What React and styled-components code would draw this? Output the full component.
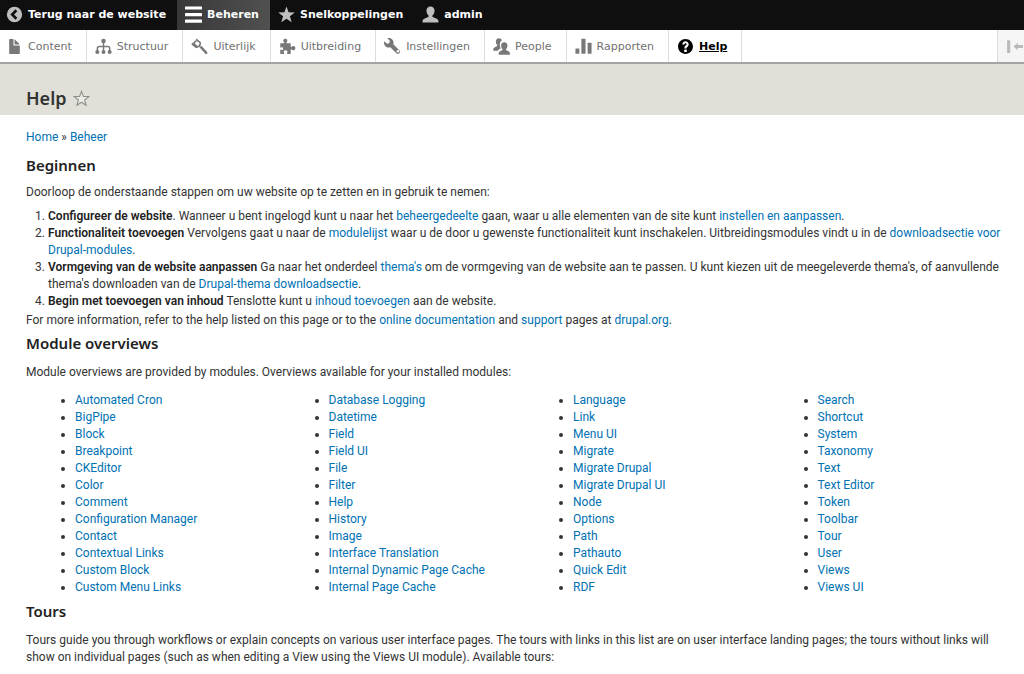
import React from 'react'
import styled, { createGlobalStyle } from 'styled-components'

const GlobalStyle = createGlobalStyle`
    * {
        box-sizing: border-box;
    }

    body {
        margin: 0;
        background: #ffffff;
        color: #333333;
        font-family: Roboto, 'Noto Sans', sans-serif;
        font-size: 12px;
        line-height: 17px;
    }
`

const StyledBar = styled.nav`
    display: flex;
    height: 30px;
    background: #0f0f0f;
    font-family: 'DejaVu Sans', Verdana, sans-serif;
    font-size: 11px;
`

const StyledTab = styled.a`
    display: flex;
    align-items: center;
    gap: 5px;
    padding: 0 11px 2px 8px;
    background: ${({ $active }) =>
        $active ? 'linear-gradient(90deg, #383838, #505050)' : 'transparent'};
    color: #ffffff;
    font-weight: bold;
    text-decoration: none;
    white-space: nowrap;

    &:first-child {
        padding-left: 6px;
    }

    svg {
        color: ${({ $active }) => ($active ? '#ffffff' : '#bebebe')};
    }
`

const StyledTray = styled.nav`
    display: flex;
    justify-content: space-between;
    height: 34px;
    border-bottom: 2px solid #a4a4a2;
    background: #ffffff;
    font-family: 'DejaVu Sans', Verdana, sans-serif;
    font-size: 11px;
`

const StyledMenu = styled.div`
    display: flex;
`

const StyledMenuLink = styled.a`
    display: flex;
    align-items: center;
    gap: 5px;
    padding: 0 14px 0 8px;
    border-right: 1px solid #dddddd;
    color: ${({ $active }) => ($active ? '#000000' : '#707070')};
    font-weight: ${({ $active }) => ($active ? 'bold' : 'normal')};
    text-decoration: none;
    white-space: nowrap;

    &:first-child {
        padding-left: 6px;
    }

    span {
        text-decoration: ${({ $active }) => ($active ? 'underline' : 'none')};
    }

    svg {
        color: ${({ $active }) => ($active ? '#000000' : '#787878')};
    }
`

const StyledToggle = styled.button`
    display: flex;
    align-items: center;
    width: 27px;
    padding: 0 0 0 8px;
    overflow: hidden;
    border: 0;
    border-left: 1px solid #dddddd;
    background: #f5f5f5;
    color: #bababa;
`

const StyledIcon = styled.svg`
    flex: none;
    width: 17px;
    height: 17px;
    fill: currentColor;
`

const StyledHeader = styled.header`
    display: flex;
    align-items: center;
    gap: 6px;
    padding: 22px 26px 4px;
    background: #e0e0d8;
`

const StyledTitle = styled.h1`
    margin: 0;
    font-family: 'Noto Sans', sans-serif;
    font-size: 18px;
    font-weight: 600;
    line-height: 25px;
`

const StyledStar = styled.button`
    display: flex;
    padding: 0;
    border: 0;
    background: none;
    color: #8c8c88;
`

const StyledMain = styled.main`
    padding: 14px 20px 8px 26px;
`

const StyledLink = styled.a`
    color: #0071b3;
    text-decoration: none;
`

const StyledHeading = styled.h2`
    margin: 0;
    color: #222222;
    font-family: 'Noto Sans', sans-serif;
    font-size: 15px;
    font-weight: 600;
    line-height: 20px;
`

const StyledIntro = styled.section`
    padding: 9px 0 4px;

    p {
        margin: 9px 0 7px;
    }

    ol {
        margin: 0 0 2px;
        padding-left: 22px;
    }

    p:last-child {
        margin: 0;
    }
`

const StyledStrong = styled.strong`
    color: #222222;
    font-weight: 600;
`

const StyledSection = styled.section`
    p {
        margin: 11px 0;
    }
`

const StyledColumns = styled.div`
    display: grid;
    grid-template-columns: repeat(4, 1fr);
    padding-bottom: 5px;
`

const StyledList = styled.ul`
    margin: 0;
    padding-left: 58px;

    &:first-child {
        padding-left: 49px;
    }
`

const icons = {
    back: (
        <>
            <circle cx="8" cy="8" r="7.2" />
            <path
                d="M9.8 4L5.8 8l4 4"
                fill="none"
                stroke="#0f0f0f"
                strokeWidth="2.4"
            />
        </>
    ),
    menu: (
        <>
            <rect x="0" y="0.4" width="16" height="3" rx="0.5" />
            <rect x="0" y="6.6" width="16" height="3" rx="0.5" />
            <rect x="0" y="12.8" width="16" height="3" rx="0.5" />
        </>
    ),
    star: (
        <path d="M8 .4l2 5.4 5.8.2-4.6 3.6 1.7 5.8L8 12.1l-4.9 3.3 1.7-5.8L.2 6 6 5.8z" />
    ),
    person: (
        <path d="M8 .4c-2.3 0-3.8 1.6-3.8 3.9 0 1.9.7 3.7 1.9 4.7.3.4.2 1.1-.3 1.4-1.3.8-5.3 1.6-5.3 3.9v1.3h15v-1.3c0-2.3-4-3.1-5.3-3.900-.5-.3-.6-1-.3-1.400 1.200-1 1.900-2.800 1.900-4.700C11.800 2 10.300.4 8 .4z" />
    ),
    file: (
        <>
            <path d="M12.5 7h-5c-.276 0-.5-.225-.5-.5v-5c0-.275-.225-.5-.5-.5h-3c-.275 0-.5.225-.5.5v13c0 .275.225.5.5.5h9c.275 0 .5-.225.5-.5v-7c0-.275-.225-.5-.5-.5z" />
            <path d="M8.5 6h4c.275 0 .34-.159.146-.354L8.354 1.354C8.159 1.159 8 1.225 8 1.5v4c0 .275.225.5.5.5z" />
        </>
    ),
    structure: (
        <>
            <circle cx="8" cy="2.8" r="2.1" />
            <path
                d="M8 4v9M2.2 13V9.7q0-1.7 1.7-1.7h8.2q1.7 0 1.7 1.7V13"
                fill="none"
                stroke="currentColor"
                strokeWidth="1.4"
            />
            <circle cx="2.2" cy="13.2" r="1.9" />
            <circle cx="8" cy="13.2" r="1.9" />
            <circle cx="13.8" cy="13.2" r="1.9" />
        </>
    ),
    brush: (
        <>
            <path
                fillRule="evenodd"
                d="M5.200.5L9.600 4.300 8.800 8.200 4.800 9.700.3 6.200 1.400 4.300 2.200 4.600 3 2.900 4.200 2.600zM5.400 2.800L3.500 5.200 6.600 7.800 8.200 5z"
            />
            <path d="M8.100 8.900l1.700-1.600 5.400 5.800q.7 1-.1 1.700-.9.700-1.800-.2z" />
        </>
    ),
    puzzle: (
        <path d="M1.200 5h3.200c.5 0 .6-.5.300-.9C3.300 2.700 4.200.8 5.900.8s2.700 1.900 1.300 3.300c-.4.400-.2.900.3.900H11v2.900c0 .6.500.8.9.400 1.400-1.500 3.500-.5 3.500 1.300s-2.100 2.800-3.500 1.300c-.4-.4-.9-.2-.9.400V15H8c-.5 0-.7-.5-.4-.9.900-1.300.1-2.500-1.400-2.500s-2.300 1.200-1.400 2.500c.3.400.1.900-.4.900H1.200v-3.700c0-.5.400-.6.8-.3 1.100.8 1.900.1 1.900-1S3.100 8.200 2 9c-.4.3-.8.100-.8-.4z" />
    ),
    wrench: (
        <path d="M14.416 11.586L8.75 5.921c.15-.449.252-.921.252-1.421C9.002 2.015 6.986 0 4.5 0c-.505 0-.981.102-1.434.255l2.431 2.431-.588 2.196-2.196.588L.268 3.025C.106 3.489 0 3.981 0 4.5 0 6.986 2.014 9 4.5 9c.5 0 .972-.102 1.421-.251l5.667 5.665c.781.781 2.047.781 2.828 0s.781-2.047 0-2.828zM13 13.75c-.69 0-1.25-.56-1.25-1.25s.56-1.25 1.25-1.25 1.25.56 1.25 1.25-.56 1.25-1.25 1.25z" />
    ),
    people: (
        <>
            <path d="M5.6.3C3.7.3 2.7 1.6 2.7 3.3c0 1.3.4 2.5 1.2 3.3.3.4.1.9-.4 1.2C2.4 8.4.2 9 .2 10.9v1h4.400c.6-1 1.600-1.600 2.700-2C6.400 8.200 6 5.600 6.900 3.800c.3-.6.800-1.100 1.400-1.400C8 1.100 7.100.3 5.600.3z" />
            <path
                d="M10.600 3.900c-1.900 0-3 1.300-3 3.100 0 1.300.5 2.600 1.300 3.400.3.400.1.900-.3 1.200-1.100.6-3.300 1.100-3.300 3v1.100h10.600v-1.100c0-1.900-2.200-2.400-3.300-3-.4-.3-.6-.8-.3-1.200.8-.8 1.300-2.100 1.300-3.400 0-1.800-1.100-3.100-3-3.100z"
                stroke="#ffffff"
                strokeWidth="0.8"
                paintOrder="stroke"
            />
        </>
    ),
    chart: (
        <>
            <rect x="0.4" y="9.8" width="3.7" height="5" rx="0.5" />
            <rect x="6" y="0.8" width="3.9" height="14" rx="0.5" />
            <rect x="11.9" y="4.4" width="3.7" height="10.4" rx="0.5" />
        </>
    ),
    help: (
        <path d="M8.002 1c-3.868 0-7.002 3.134-7.002 7s3.134 7 7.002 7c3.865 0 7-3.134 7-7s-3.135-7-7-7zm3 5c0 .551-.16 1.085-.477 1.586l-.158.22c-.07.093-.189.241-.361.393-.168.148-.35.299-.545.447l-.203.189-.141.129-.096.17-.021.235v.63h-2.001v-.704c.026-.396.078-.73.204-.999.125-.269.271-.498.439-.688l.225-.21-.01-.015.176-.14.137-.128c.186-.139.357-.277.516-.417l.148-.18c.098-.152.168-.323.168-.518 0-.552-.447-1-1-1s-1.002.448-1.002 1h-2c0-1.657 1.343-3 3.002-3 1.656 0 3 1.343 3 3zm-1.75 6.619c0 .344-.281.625-.625.625h-1.25c-.345 0-.626-.281-.626-.625v-1.238c0-.344.281-.625.626-.625h1.25c.344 0 .625.281.625.625v1.238z" />
    ),
    collapse: (
        <>
            <rect x="1" y="2" width="3" height="12" rx="0.5" />
            <path d="M7 8l4-3.5v2.2h5v2.6h-5v2.2z" />
        </>
    ),
    starOutline: (
        <path
            d="M8 1.3l1.8 4.7 5.1.2-4 3.2 1.4 4.9L8 11.5l-4.3 2.8 1.4-4.9-4-3.2 5.1-.2z"
            fill="#ecece6"
            stroke="currentColor"
        />
    ),
}

function Icon({ name }) {
    return (
        <StyledIcon viewBox="0 0 16 16" aria-hidden="true">
            {icons[name]}
        </StyledIcon>
    )
}

const tabs = [
    { icon: 'back', label: 'Terug naar de website' },
    { icon: 'menu', label: 'Beheren', active: true },
    { icon: 'star', label: 'Snelkoppelingen' },
    { icon: 'person', label: 'admin' },
]

const menu = [
    { icon: 'file', label: 'Content' },
    { icon: 'structure', label: 'Structuur' },
    { icon: 'brush', label: 'Uiterlijk' },
    { icon: 'puzzle', label: 'Uitbreiding' },
    { icon: 'wrench', label: 'Instellingen' },
    { icon: 'people', label: 'People' },
    { icon: 'chart', label: 'Rapporten' },
    { icon: 'help', label: 'Help', active: true },
]

const modules = [
    [
        'Automated Cron',
        'BigPipe',
        'Block',
        'Breakpoint',
        'CKEditor',
        'Color',
        'Comment',
        'Configuration Manager',
        'Contact',
        'Contextual Links',
        'Custom Block',
        'Custom Menu Links',
    ],
    [
        'Database Logging',
        'Datetime',
        'Field',
        'Field UI',
        'File',
        'Filter',
        'Help',
        'History',
        'Image',
        'Interface Translation',
        'Internal Dynamic Page Cache',
        'Internal Page Cache',
    ],
    [
        'Language',
        'Link',
        'Menu UI',
        'Migrate',
        'Migrate Drupal',
        'Migrate Drupal UI',
        'Node',
        'Options',
        'Path',
        'Pathauto',
        'Quick Edit',
        'RDF',
    ],
    [
        'Search',
        'Shortcut',
        'System',
        'Taxonomy',
        'Text',
        'Text Editor',
        'Token',
        'Toolbar',
        'Tour',
        'User',
        'Views',
        'Views UI',
    ],
]

export default function App() {
    return (
        <>
            <GlobalStyle />
            <StyledBar>
                {tabs.map(({ icon, label, active }) => (
                    <StyledTab key={label} href="#" $active={active}>
                        <Icon name={icon} />
                        {label}
                    </StyledTab>
                ))}
            </StyledBar>
            <StyledTray>
                <StyledMenu>
                    {menu.map(({ icon, label, active }) => (
                        <StyledMenuLink key={label} href="#" $active={active}>
                            <Icon name={icon} />
                            <span>{label}</span>
                        </StyledMenuLink>
                    ))}
                </StyledMenu>
                <StyledToggle type="button" aria-label="Verticaal">
                    <Icon name="collapse" />
                </StyledToggle>
            </StyledTray>
            <StyledHeader>
                <StyledTitle>Help</StyledTitle>
                <StyledStar type="button" aria-label="Snelkoppeling">
                    <Icon name="starOutline" />
                </StyledStar>
            </StyledHeader>
            <StyledMain>
                <nav>
                    <StyledLink href="#">Home</StyledLink> »{' '}
                    <StyledLink href="#">Beheer</StyledLink>
                </nav>
                <StyledIntro>
                    <StyledHeading>Beginnen</StyledHeading>
                    <p>
                        Doorloop de onderstaande stappen om uw website op te
                        zetten en in gebruik te nemen:
                    </p>
                    <ol>
                        <li>
                            <StyledStrong>Configureer de website</StyledStrong>.
                            Wanneer u bent ingelogd kunt u naar het{' '}
                            <StyledLink href="#">beheergedeelte</StyledLink>{' '}
                            gaan, waar u alle elementen van de site kunt{' '}
                            <StyledLink href="#">
                                instellen en aanpassen
                            </StyledLink>
                            .
                        </li>
                        <li>
                            <StyledStrong>
                                Functionaliteit toevoegen
                            </StyledStrong>{' '}
                            Vervolgens gaat u naar de{' '}
                            <StyledLink href="#">modulelijst</StyledLink> waar u
                            de door u gewenste functionaliteit kunt inschakelen.
                            Uitbreidingsmodules vindt u in de{' '}
                            <StyledLink href="#">
                                downloadsectie voor Drupal-modules
                            </StyledLink>
                            .
                        </li>
                        <li>
                            <StyledStrong>
                                Vormgeving van de website aanpassen
                            </StyledStrong>{' '}
                            Ga naar het onderdeel{' '}
                            <StyledLink href="#">thema's</StyledLink> om de
                            vormgeving van de website aan te passen. U kunt
                            kiezen uit de meegeleverde thema's, of aanvullende
                            thema's downloaden van de{' '}
                            <StyledLink href="#">
                                Drupal-thema downloadsectie
                            </StyledLink>
                            .
                        </li>
                        <li>
                            <StyledStrong>
                                Begin met toevoegen van inhoud
                            </StyledStrong>{' '}
                            Tenslotte kunt u{' '}
                            <StyledLink href="#">inhoud toevoegen</StyledLink>{' '}
                            aan de website.
                        </li>
                    </ol>
                    <p>
                        For more information, refer to the help listed on this
                        page or to the{' '}
                        <StyledLink href="#">online documentation</StyledLink>{' '}
                        and <StyledLink href="#">support</StyledLink> pages at{' '}
                        <StyledLink href="#">drupal.org</StyledLink>.
                    </p>
                </StyledIntro>
                <StyledSection>
                    <StyledHeading>Module overviews</StyledHeading>
                    <p>
                        Module overviews are provided by modules. Overviews
                        available for your installed modules:
                    </p>
                    <StyledColumns>
                        {modules.map((names) => (
                            <StyledList key={names[0]}>
                                {names.map((name) => (
                                    <li key={name}>
                                        <StyledLink href="#">{name}</StyledLink>
                                    </li>
                                ))}
                            </StyledList>
                        ))}
                    </StyledColumns>
                </StyledSection>
                <StyledSection>
                    <StyledHeading>Tours</StyledHeading>
                    <p>
                        Tours guide you through workflows or explain concepts on
                        various user interface pages. The tours with links in
                        this list are on user interface landing pages; the tours
                        without links will show on individual pages (such as
                        when editing a View using the Views UI module).
                        Available tours:
                    </p>
                </StyledSection>
            </StyledMain>
        </>
    )
}
